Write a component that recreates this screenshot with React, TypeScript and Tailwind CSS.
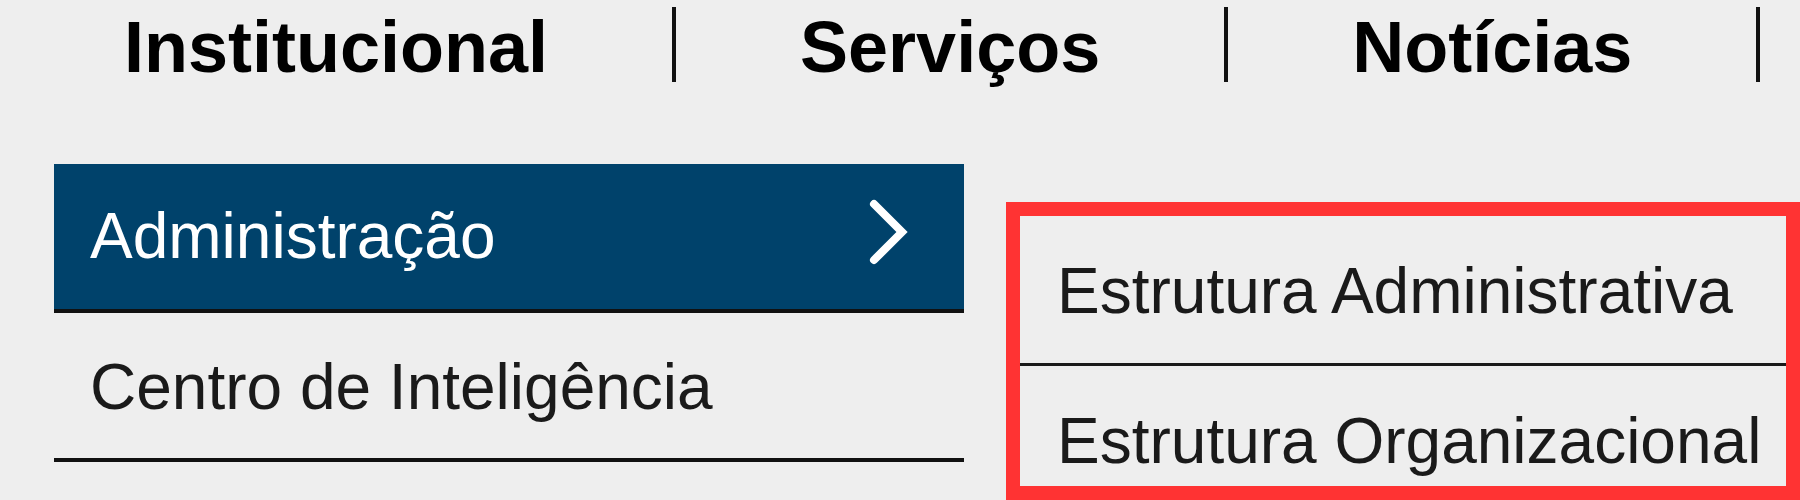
import React from 'react';

const topLinks = ['Institucional', 'Serviços', 'Notícias'];

const sideItems = [
  { label: 'Administração', active: true },
  { label: 'Centro de Inteligência', active: false },
];

const subItems = ['Estrutura Administrativa', 'Estrutura Organizacional'];

const Chevron = () => (
  <svg width="40" height="66" viewBox="0 0 40 66" className="-mt-[8px]">
    <path d="M6 5 L34 33 L6 61" fill="none" stroke="#ffffff" strokeWidth="8" strokeLinecap="round" strokeLinejoin="miter" />
  </svg>
);

export default function App() {
  return (
    <div className="min-h-[500px] w-full bg-[#eeeeee] font-['Liberation_Sans',Arial,sans-serif] overflow-hidden">
      {/* Top nav */}
      <nav className="flex items-start gap-[124px] pl-[124px] pt-[7px]">
        {topLinks.map((link) => (
          <React.Fragment key={link}>
            <a href="#" className="pt-[3px] text-[72px] leading-[75px] font-bold text-black">
              {link}
            </a>
            <span className="w-[4px] h-[75px] bg-[#111111]"></span>
          </React.Fragment>
        ))}
      </nav>

      <div className="flex items-start">
        {/* Side menu */}
        <ul className="ml-[54px] mt-[79px] w-[910px]">
          {sideItems.map((item, i) => (
            <li
              key={item.label}
              className={`flex items-center justify-between pl-[36px] pr-[56px] border-b-[4px] border-[#111111] ${
                i === 0 ? 'pt-[36px] pb-[37px]' : 'pt-[38px] pb-[35px]'
              } ${item.active ? 'bg-[#00426b] text-white' : 'text-[#1a1a1a]'}`}
            >
              <span className="text-[64px] leading-[72px]">{item.label}</span>
              {item.active && <Chevron />}
            </li>
          ))}
        </ul>

        {/* Submenu, highlighted */}
        <div className="ml-[42px] mt-[117px] w-[794px] h-[298px] border-[14px] border-[#ff3333] overflow-hidden">
          {subItems.map((item, i) => (
            <div
              key={item}
              className={`pl-[37px] pt-[39px] pb-[36px] text-[64px] leading-[72px] text-[#1a1a1a] ${
                i === 0 ? 'border-b-[3px] border-[#1a1a1a]' : ''
              }`}
            >
              {item}
            </div>
          ))}
        </div>
      </div>
    </div>
  );
}
